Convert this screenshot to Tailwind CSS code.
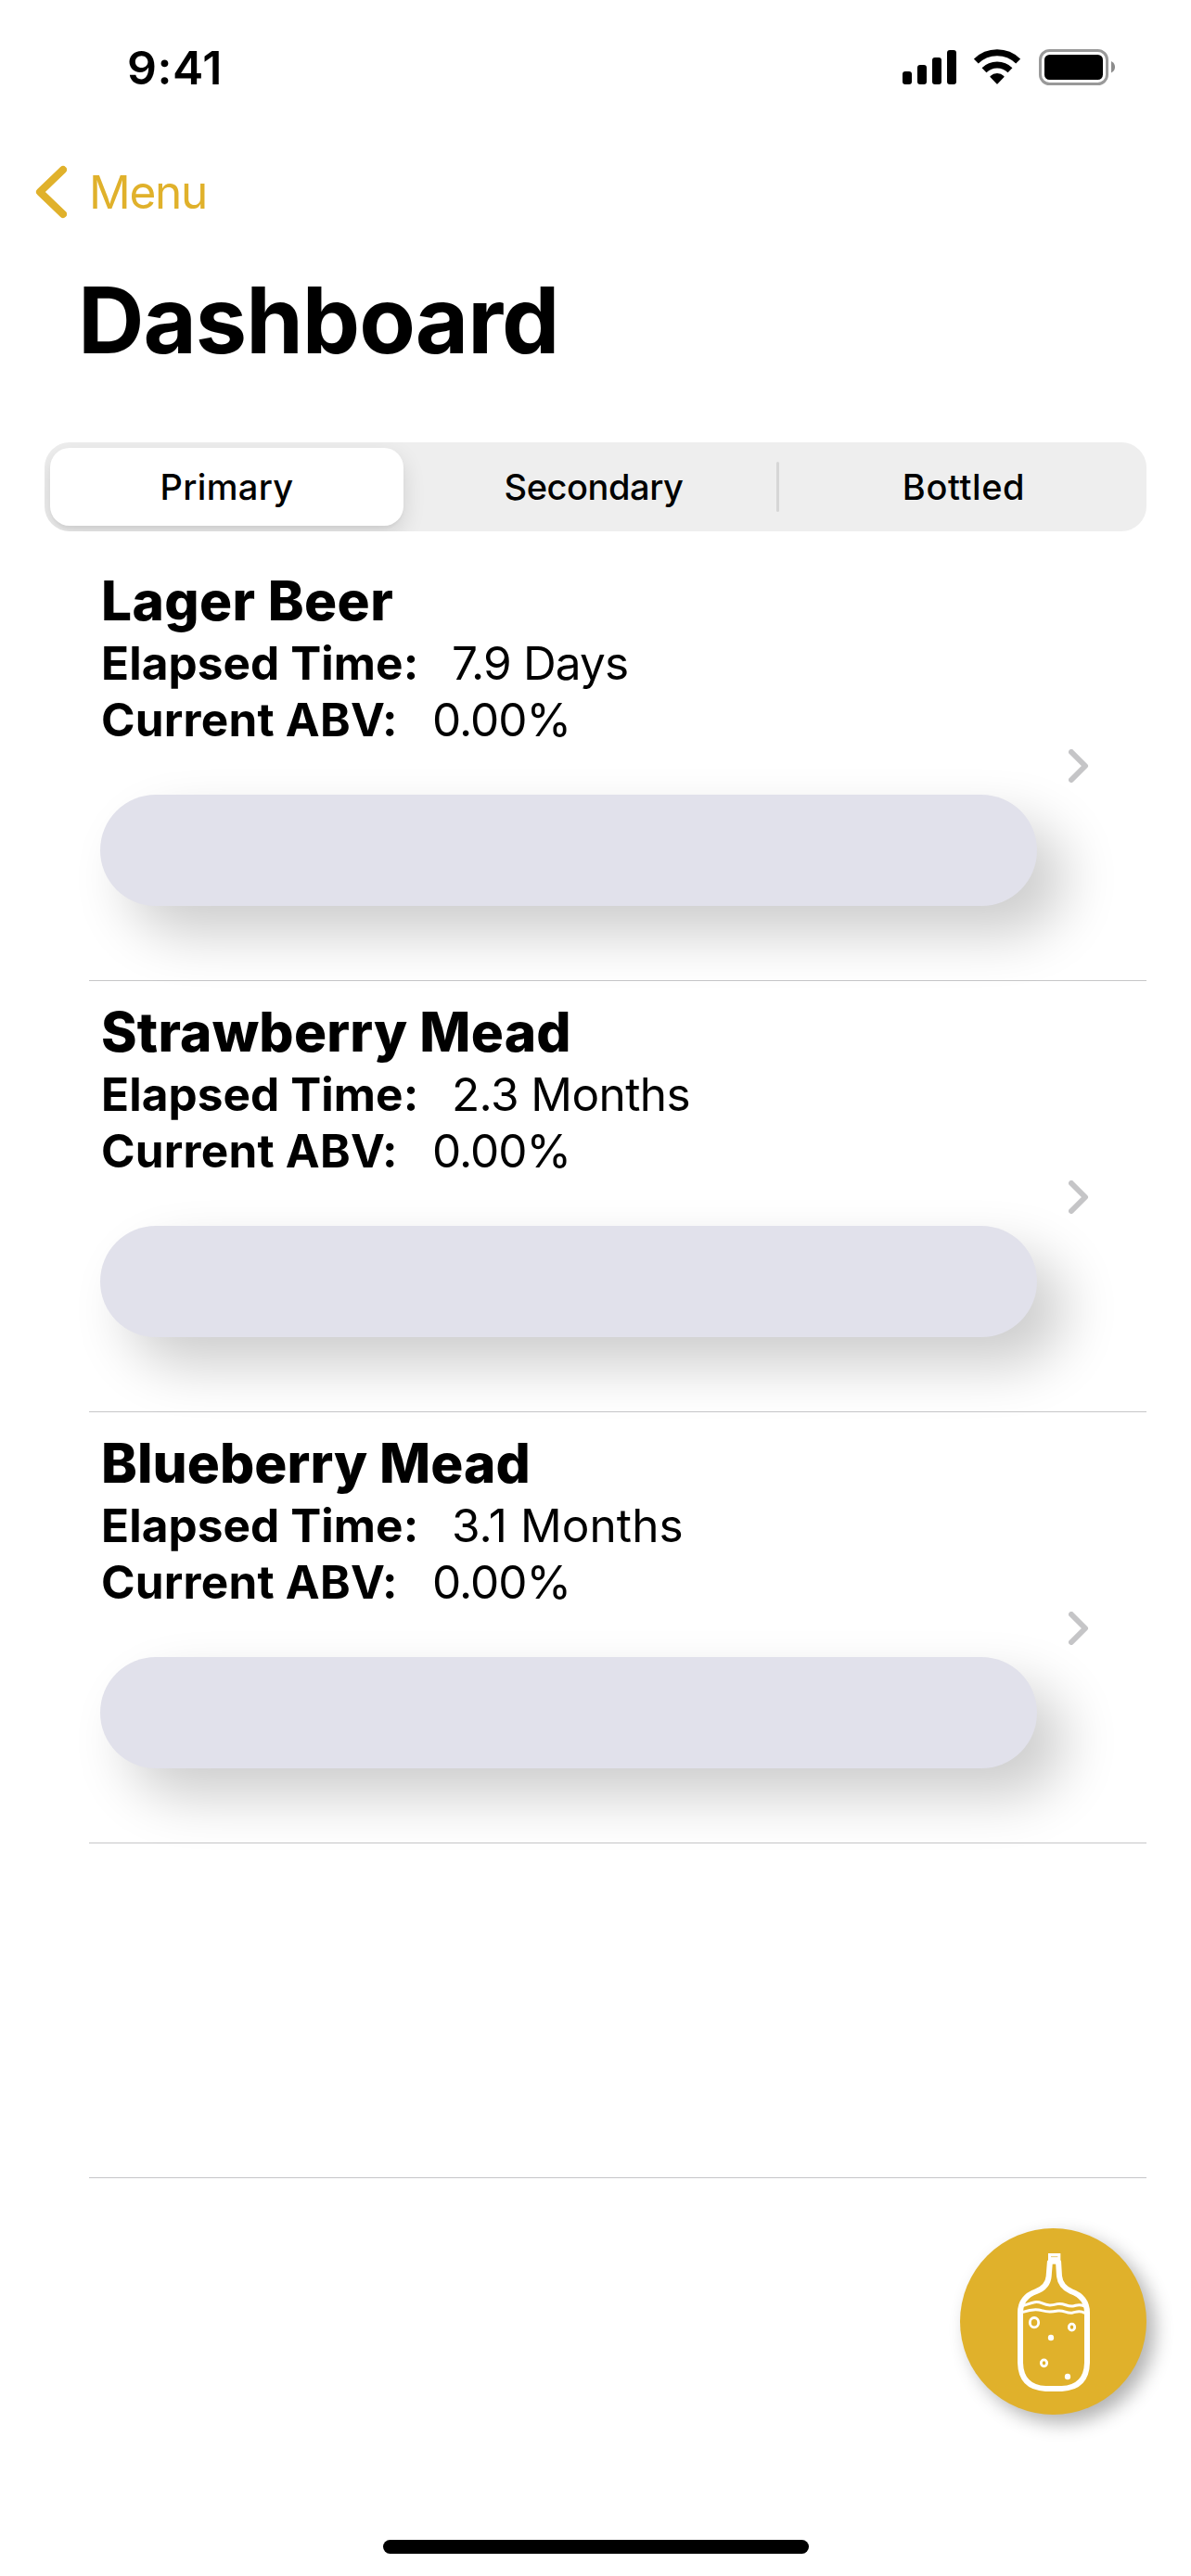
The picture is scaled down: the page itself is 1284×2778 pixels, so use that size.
<!DOCTYPE html>
<html lang="en">
<head>
<meta charset="utf-8">
<title>Dashboard</title>
<script src="https://cdn.jsdelivr.net/npm/@tailwindcss/browser@4"></script>
</head>
<body class="bg-white">
<div class="flex h-[2778px] w-[1284px] flex-col overflow-hidden bg-white font-['Inter',sans-serif] text-black">

  <!-- Status bar -->
  <header class="flex h-[146px] items-center justify-between pr-[80px] pl-[137px]">
    <div class="text-[50px] leading-none font-semibold tracking-[0.5px]">9:41</div>
    <div class="flex h-10 items-center">
      <svg class="mr-[19px]" width="58" height="40" viewBox="0 0 58 40">
        <rect x="0" y="24" width="10" height="14" rx="3"/>
        <rect x="16" y="17" width="10" height="21" rx="3"/>
        <rect x="32" y="9" width="10" height="29" rx="3"/>
        <rect x="48" y="1" width="10" height="37" rx="3"/>
      </svg>
      <svg class="mr-5" width="50" height="40" viewBox="0 0 150 120">
        <g fill="none" stroke="#000">
          <path d="M7 39 A97 97 0 0 1 143 39" stroke-width="21"/>
          <path d="M33 68 A60 60 0 0 1 117 68" stroke-width="21"/>
        </g>
        <path d="M53 91 Q51 89 53 87 A32 32 0 0 1 97 87 Q99 89 97 91 L77 112 Q75 114 73 112 Z"/>
      </svg>
      <svg width="84" height="40" viewBox="0 0 84 40">
        <rect x="1.5" y="1.5" width="72" height="36" rx="10" fill="none" stroke="#999" stroke-width="3"/>
        <rect x="6" y="6" width="63" height="27" rx="5.5"/>
        <path d="M78 13 Q82 15 82 19.300 Q82 23.500 78 25.500 Z" fill="#8c8c8c"/>
      </svg>
    </div>
  </header>

  <!-- Navigation -->
  <nav class="flex h-[122px] items-center pl-[37px] text-[#e0b12b]">
    <svg class="mr-[24px]" width="35" height="58" viewBox="0 0 35 58" fill="none" stroke="currentColor" stroke-width="8" stroke-linecap="round" stroke-linejoin="round"><path d="M31 5 L6 29 L31 53"/></svg>
    <span class="pt-0.5 text-[49.5px] leading-none tracking-[-1.27px]">Menu</span>
  </nav>
  <h1 class="pl-[84px] text-[99px] leading-[154px] font-bold tracking-[-1.06px]">Dashboard</h1>

  <!-- Segmented control -->
  <div class="mt-[55px] mr-12 ml-12 flex h-24 items-center overflow-hidden rounded-[27px] bg-[#eeeeee] text-[38px] leading-none font-medium">
    <div class="ml-1.5 flex h-[84px] w-[381px] items-center justify-center rounded-[21px] bg-white tracking-[0.37px] shadow-[0_9px_24px_rgba(0,0,0,0.12),0_3px_3px_rgba(0,0,0,0.04)]"><span>Primary</span></div>
    <div class="flex w-[402px] items-center justify-center pl-2 tracking-[-0.43px]">Secondary</div>
    <div class="h-[54px] w-[3px] rounded-full bg-[#d6d6d6]"></div>
    <div class="flex flex-1 items-center justify-center pl-0.5 tracking-[0.6px]">Bottled</div>
  </div>

  <!-- Batches -->
  <main class="mt-5 mr-12 ml-24">
    <section class="flex h-[465px] items-center border-b border-[#c6c6c8] pl-3">
      <div class="h-full w-[1010px] pt-[18px]">
        <h2 class="pl-px text-[58.5px] leading-[74px] font-extrabold tracking-[0.4px]">Lager Beer</h2>
        <p class="flex pl-px text-[49.5px] leading-[61px]"><span class="w-[378px] font-bold tracking-[0.08px]">Elapsed Time:</span><span class="tracking-[-0.85px]">7.9 Days</span></p>
        <p class="flex pl-px text-[49.5px] leading-[61px]"><span class="w-[357px] font-bold tracking-[0.22px]">Current ABV:</span><span class="tracking-[-0.98px]">0.00%</span></p>
        <div class="mt-[50px] h-[120px] rounded-full bg-[#e1e1eb] shadow-[30px_30px_60px_rgba(0,0,0,0.2)]"></div>
      </div>
      <svg class="relative mt-0.5 ml-[34px]" width="22" height="36" viewBox="0 0 22 36" fill="none" stroke="#c5c5c7" stroke-width="6" stroke-linecap="round" stroke-linejoin="round"><path d="M3 3 L18 18 L3 33"/></svg>
    </section>
    <section class="flex h-[465px] items-center border-b border-[#c6c6c8] pl-3">
      <div class="h-full w-[1010px] pt-[18px]">
        <h2 class="pl-px text-[58.5px] leading-[74px] font-extrabold tracking-[0.22px]">Strawberry Mead</h2>
        <p class="flex pl-px text-[49.5px] leading-[61px]"><span class="w-[378px] font-bold tracking-[0.08px]">Elapsed Time:</span><span class="tracking-[-0.58px]">2.3 Months</span></p>
        <p class="flex pl-px text-[49.5px] leading-[61px]"><span class="w-[357px] font-bold tracking-[0.22px]">Current ABV:</span><span class="tracking-[-0.98px]">0.00%</span></p>
        <div class="mt-[50px] h-[120px] rounded-full bg-[#e1e1eb] shadow-[30px_30px_60px_rgba(0,0,0,0.2)]"></div>
      </div>
      <svg class="relative mt-0.5 ml-[34px]" width="22" height="36" viewBox="0 0 22 36" fill="none" stroke="#c5c5c7" stroke-width="6" stroke-linecap="round" stroke-linejoin="round"><path d="M3 3 L18 18 L3 33"/></svg>
    </section>
    <section class="flex h-[465px] items-center border-b border-[#c6c6c8] pl-3">
      <div class="h-full w-[1010px] pt-[18px]">
        <h2 class="pl-px text-[58.5px] leading-[74px] font-extrabold tracking-[0.06px]">Blueberry Mead</h2>
        <p class="flex pl-px text-[49.5px] leading-[61px]"><span class="w-[378px] font-bold tracking-[0.08px]">Elapsed Time:</span><span class="tracking-[0.1px]">3.1 Months</span></p>
        <p class="flex pl-px text-[49.5px] leading-[61px]"><span class="w-[357px] font-bold tracking-[0.22px]">Current ABV:</span><span class="tracking-[-0.98px]">0.00%</span></p>
        <div class="mt-[50px] h-[120px] rounded-full bg-[#e1e1eb] shadow-[30px_30px_60px_rgba(0,0,0,0.2)]"></div>
      </div>
      <svg class="relative mt-0.5 ml-[34px]" width="22" height="36" viewBox="0 0 22 36" fill="none" stroke="#c5c5c7" stroke-width="6" stroke-linecap="round" stroke-linejoin="round"><path d="M3 3 L18 18 L3 33"/></svg>
    </section>
    <div class="h-[361px] border-b border-[#c6c6c8]"></div>
  </main>

  <!-- Add batch button -->
  <button class="mt-[54px] mr-12 flex h-[201px] w-[201px] justify-center self-end rounded-full bg-[#e0b12b] pt-[17px] pl-px shadow-[9px_9px_20px_rgba(0,0,0,0.3)]" aria-label="Add batch">
    <svg width="92" height="170" viewBox="0 0 276 510" fill="none" stroke="#fff">
      <path d="M126 54 L122 104 Q119 138 82 153 Q30 172 30 222 V384 Q32 464 112 468 H164 Q244 464 246 384 V222 Q246 172 194 153 Q160 138 156 104 L153 54" stroke-width="18"/>
      <path d="M120 30 H160 V65 H120 Z" fill="#fff" stroke="none"/>
      <path d="M129 41 H151" stroke="#e0b12b" stroke-width="2"/>
      <path d="M38 200 C62 193 78 182 99 191 C120 200 130 199 150 194 C171 189 180 204 200 201 C215 198 218 193 238 201" stroke-width="9"/>
      <path d="M38 220 C62 212 80 209 99 215 C120 221 130 220 152 216 C172 213 180 226 200 222 C214 219 222 214 238 223" stroke-width="9"/>
      <ellipse cx="75" cy="254" rx="14" ry="15.500" stroke-width="8.500"/>
      <ellipse cx="196.500" cy="269" rx="9.500" ry="10.500" stroke-width="8.500"/>
      <ellipse cx="106.500" cy="385" rx="9.500" ry="10.500" stroke-width="8.500"/>
      <ellipse cx="129" cy="303" rx="9.500" ry="10" fill="#fff" stroke="none"/>
      <ellipse cx="183" cy="429" rx="9.500" ry="10" fill="#fff" stroke="none"/>
    </svg>
  </button>

  <!-- Home indicator -->
  <div class="mt-[135px] ml-[413px] h-[15px] w-[459px] rounded-full bg-black"></div>
</div>
</body>
</html>
